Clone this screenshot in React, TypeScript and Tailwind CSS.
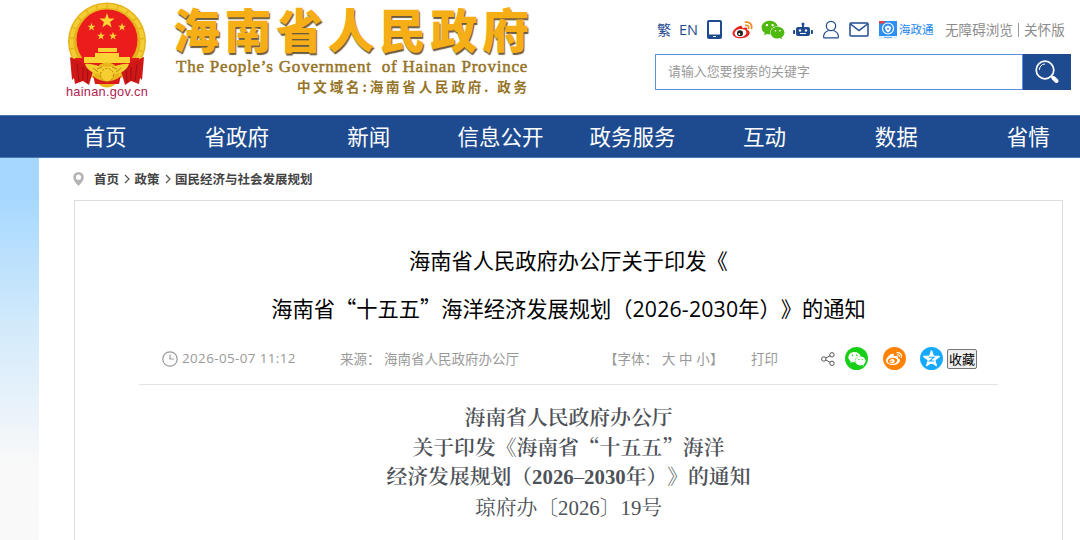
import React from "react";
import { FaWeixin, FaWeibo } from "react-icons/fa";

const nav = ["首页", "省政府", "新闻", "信息公开", "政务服务", "互动", "数据", "省情"];

const star = (cx: number, cy: number, r: number) =>
  Array.from({ length: 10 }, (_, i) => {
    const a = -Math.PI / 2 + (i * Math.PI) / 5;
    const k = i % 2 ? r * 0.4 : r;
    return `${cx + k * Math.cos(a)},${cy + k * Math.sin(a)}`;
  }).join(" ");

function Emblem() {
  return (
    <svg width="80" height="86" viewBox="0 0 80 86" className="block">
      <circle cx="40" cy="39.500" r="39" fill="#e6b31d" />
      <circle cx="40" cy="39.500" r="35.500" fill="none" stroke="#f3cd33" strokeWidth="4" strokeDasharray="9 1.500" />
      <circle cx="40" cy="38" r="30.500" fill="#ea1c1c" />
      <path d="M8 56h64l3 10-8 4H13l-8-4z" fill="#df1a1a" />
      <g fill="#fbd335">
        <polygon points={star(40, 19, 8)} />
        <polygon points={star(24.5, 25, 4.2)} />
        <polygon points={star(55, 25, 4.2)} />
        <polygon points={star(34, 34, 4.2)} />
        <polygon points={star(46, 34, 4.2)} />
        <path d="M31 46h19v4H31zM28 51h24v4H28zM17 55h46v6H17z" />
      </g>
      <path d="M3 55l13 6 10 8-4 14-6-4-8 3-1-6-2 2zM77 55l-13 6-10 8 4 14 6-4 8 3 1-6 2 2z" fill="#cf1717" />
      <path d="M10 62l2 17M16 65v13M21 67l-1 14M70 62l-2 17M64 65v13M59 67l1 14" stroke="#991111" strokeWidth="1" />
      <circle cx="40" cy="73" r="12.500" fill="#e9b71c" />
      <path d="M18 62c8-1 12 3 22 3s14-4 22-3c-3 9-11 10-22 10s-19-1-22-10z" fill="#f5cf30" />
      <path d="M30 67l5-2M45 65l5 2M26 66l5 4M54 66l-5 4" stroke="#bd7d12" />
      <path d="M26 73c4 8 24 8 28 0l-2 9H28z" fill="#d81a1a" />
      <circle cx="40" cy="73" r="6.500" fill="#f5cf30" stroke="#bd7d12" strokeWidth="1" strokeDasharray="2 1.500" />
    </svg>
  );
}

function WeiboColor() {
  return (
    <svg width="21" height="18" viewBox="0 0 21 18">
      <path d="M8 5C4 6 0 10 .6 13c.6 3 4.400 4.300 8.400 4.200 5-.2 8.700-2.700 8.700-5.500 0-1.700-1.300-2.500-2.600-2.800.7-1.900-.6-3.100-4.700-1.600C10.600 5.400 9.700 4.500 8 5z" fill="#e1251b" />
      <ellipse cx="8.500" cy="12" rx="6" ry="4" fill="#fff" transform="rotate(-8 8.500 12)" />
      <circle cx="8" cy="12.300" r="3" fill="#222" />
      <circle cx="7.300" cy="12.900" r="1" fill="#fff" />
      <path d="M13.500 1.200c4-.8 7 2.300 6 6.300M13.800 4.400c2-.3 3.300 1 2.800 2.900" fill="none" stroke="#f08a24" strokeWidth="1.700" strokeLinecap="round" />
    </svg>
  );
}

function Header() {
  return (
    <header className="flex h-[115px]">
      <div className="ml-[65px] flex w-[83px] flex-col items-center pt-[2px]">
        <Emblem />
        <span className="-mt-[4px] pl-px text-[12.800px] leading-[15px] tracking-[0.020em] text-[#b01c50] font-['Liberation_Sans',sans-serif]">hainan.gov.cn</span>
      </div>
      <div className="ml-[25px] flex w-[370px] flex-col">
        <div className="h-[56px] whitespace-nowrap text-[47px] font-black leading-[56px] tracking-[4.500px] text-[#f6ae17] [text-shadow:1px_2px_1px_#6b5a3c]">海南省人民政府</div>
        <div className="ml-[3px] h-[20px] whitespace-pre text-[17px] leading-[22px] tracking-[0.790px] text-[#967427] [-webkit-text-stroke:0.500px_#967427] font-['Liberation_Serif',serif]">The People’s Government  of Hainan Province</div>
        <div className="ml-[124px] h-[20px] whitespace-pre text-[13.500px] font-bold leading-[20px] tracking-[2.850px] text-[#967427]">中文域名:海南省人民政府. 政务</div>
      </div>
      <div className="ml-[112px] w-[416px]">
        <div className="mt-[19px] flex h-[21px] items-center whitespace-nowrap text-[#1e4b8f]">
          <span className="ml-[2px] w-[22px] text-[14px]">繁</span>
          <span className="w-[28px] text-[14.500px] font-['Open_Sans',sans-serif]">EN</span>
          <svg width="15" height="19" viewBox="0 0 15 19"><path d="M2 0h11a2 2 0 0 1 2 2v15a2 2 0 0 1-2 2H2a2 2 0 0 1-2-2V2a2 2 0 0 1 2-2zm0 2v12.500h11V2zM6 16v1h3v-1z" fill="currentColor" fillRule="evenodd" /></svg>
          <span className="ml-[10px]"><WeiboColor /></span>
          <FaWeixin className="ml-[8px] h-[22px] w-[24px] text-[#4fb910]" />
          <svg className="ml-[8px]" width="20" height="16" viewBox="0 0 20 16" fill="currentColor"><path d="M9 2h2v3h4a2 2 0 0 1 2 2v5a2 2 0 0 1-2 2H5a2 2 0 0 1-2-2V7a2 2 0 0 1 2-2h4zM1 8h1v4H1a1 1 0 0 1-1-1V9a1 1 0 0 1 1-1zm17 0h1a1 1 0 0 1 1 1v2a1 1 0 0 1-1 1h-1z" /><circle cx="10" cy="2" r="1.500" /><circle cx="7" cy="8.500" r="1.200" fill="#fff" /><circle cx="13" cy="8.500" r="1.200" fill="#fff" /><path d="M7 11.500h6" stroke="#fff" /></svg>
          <svg className="ml-[9px]" width="18" height="19" viewBox="0 0 18 19" fill="none" stroke="currentColor" strokeWidth="1.200"><circle cx="9" cy="6" r="4.700" /><path d="M1.500 17.500c0-4 2-6 5-7M16.500 17.500c0-4-2-6-5-7M1.500 17.800h15" /></svg>
          <svg className="ml-[9px]" width="20" height="15" viewBox="0 0 20 15" fill="none" stroke="currentColor" strokeWidth="1.500"><rect x="1" y="1" width="18" height="13" rx="1" /><path d="M1.500 2l8.500 6.500L18.500 2" /></svg>
          <svg className="ml-[10px]" width="18" height="18" viewBox="0 0 18 18"><path d="M0 0h18v15H0z" fill="#2b8ff5" /><path d="M0 0h6L5 2.500H0z" fill="#e64040" /><circle cx="9" cy="7.500" r="5.500" fill="none" stroke="#fff" strokeWidth="1.200" /><path d="M6 6l3-1.500L12 6c0 3-1 4.500-3 5.500C7 10.500 6 9 6 6z" fill="#fff" /><circle cx="9" cy="7.800" r="1" fill="#2b8ff5" /><path d="M0 15h18v3H0z" fill="#e3f1ff" /><path d="M5 16.500h8" stroke="#6fb2f5" /></svg>
          <span className="ml-[2px] w-[46px] text-[11.500px] text-[#1b86f0]">海政通</span>
          <span className="text-[13.600px] text-[#8c8c8c]">无障碍浏览</span>
          <span className="ml-[5px] mr-[4px] h-[14px] w-px bg-[#999]" />
          <span className="ml-px text-[13.600px] text-[#8c8c8c]">关怀版</span>
        </div>
        <div className="mt-[14px] flex h-[36px]">
          <div className="w-[368px] border border-[#5b8fe0] pl-[12px] text-[12.900px] leading-[32px] text-[#999]">请输入您要搜索的关键字</div>
          <div className="flex flex-1 items-center justify-center bg-[#1e4b8f]">
            <svg width="26" height="26" viewBox="0 0 26 26" fill="none" stroke="#fff"><circle cx="11" cy="11" r="8.800" strokeWidth="1.700" /><path d="M5.500 11A5.500 5.500 0 0 1 11 5" strokeWidth="1" /><path d="M17.500 17.500l1.500 1.500" strokeWidth="2" /><path d="M19.500 19l3 3" strokeWidth="4" strokeLinecap="round" /></svg>
          </div>
        </div>
      </div>
    </header>
  );
}

function Round({ color, children }: { color: string; children: React.ReactNode }) {
  return <span className="flex size-[23px] items-center justify-center rounded-full text-white" style={{ background: color }}>{children}</span>;
}

function Chevron() {
  return (
    <svg width="6" height="10" viewBox="0 0 6 10" className="ml-[5px] mr-[4.500px]" fill="none" stroke="#555" strokeWidth="1.200"><path d="M1 1l4 4-4 4" /></svg>
  );
}

export default function App() {
  return (
    <div lang="zh-CN" className="flex h-[540px] w-[1080px] flex-col overflow-hidden bg-white font-['Noto_Sans_CJK_SC',sans-serif] [text-spacing-trim:space-all]">
      <Header />
      <nav className="grid h-[43px] shrink-0 grid-cols-[repeat(8,131.900px)] border-y border-[#4b76b6] bg-[#1e4b8f] pl-[39px] text-center text-[21.500px] leading-[40px] text-white">
        {nav.map((n) => <span key={n} className="whitespace-nowrap">{n}</span>)}
      </nav>
      <div className="flex min-h-0 flex-1">
        <aside className="w-[39px] shrink-0 bg-linear-to-b from-[#a6d8ff] from-10% via-[#d0e9fb] via-42% to-[#f9f9f9] to-80%" />
        <main className="flex w-[1041px] flex-col">
          <div className="ml-[34px] flex h-[42px] items-center text-[12.500px] font-bold text-[#444]">
            <svg width="11" height="14" viewBox="0 0 11 14" className="mr-[10px]"><path d="M5.500 0A5.300 5.300 0 0 0 .2 5.300C.2 9 5.500 14 5.500 14s5.300-5 5.300-8.700A5.300 5.300 0 0 0 5.500 0zm0 2.600a2.600 2.600 0 1 1 0 5.200 2.600 2.600 0 0 1 0-5.200z" fill="#b3b3b3" fillRule="evenodd" /></svg>
            <span>首页</span>
            <Chevron />
            <span>政策</span>
            <Chevron />
            <span>国民经济与社会发展规划</span>
          </div>
          <article className="ml-[35px] flex w-[989px] flex-1 flex-col border border-b-0 border-[#ddd]">
            <h1 className="mt-[35px] whitespace-nowrap text-center text-[21.250px] leading-[48px] text-black">
              <span className="block">海南省人民政府办公厅关于印发《</span>
              <span className="block">海南省“十五五”海洋经济发展规划（<span className="tracking-[0.200px] font-['Open_Sans',sans-serif]">2026-2030</span>年）》的通知</span>
            </h1>
            <div className="mx-[64px] flex h-[52px] items-center whitespace-nowrap border-b border-[#e4e4e4] pl-[23px] text-[13.500px] text-[#999]">
              <svg width="16" height="16" viewBox="0 0 16 16" fill="none" stroke="#999" strokeWidth="1.200"><circle cx="8" cy="8" r="7.200" /><path d="M8 3.500V8h4" /></svg>
              <span className="ml-[4px] w-[158px] text-[13.400px] tracking-[0.400px] font-['Open_Sans',sans-serif]">2026-05-07 11:12</span>
              <span className="w-[44px]">来源：</span>
              <span className="w-[220px]">海南省人民政府办公厅</span>
              <span className="w-[58px]">【字体：</span>
              <span className="w-[89px] tracking-[0.300px]">大 中 小】</span>
              <span className="w-[70px]">打印</span>
              <svg width="14" height="14" viewBox="0 0 14 14" fill="none" stroke="#555" strokeWidth="1"><circle cx="2.800" cy="7" r="2.200" /><circle cx="11" cy="2.800" r="2.200" /><circle cx="11" cy="11.300" r="2.200" /><path d="M4.800 6l4.200-2.200M4.800 8l4.200 2.300" /></svg>
              <span className="ml-[10px] flex gap-[14.500px]">
                <Round color="#17cf17"><FaWeixin className="size-[18px]" /></Round>
                <Round color="#ff8200"><FaWeibo className="size-[16px]" /></Round>
                <Round color="#15aaff"><svg width="17" height="17" viewBox="0 0 17 17"><polygon points={star(8.5, 9, 8)} fill="#fff" stroke="#fff" strokeLinejoin="round" strokeWidth="1.500" /><path d="M6 7.300h5l-4.500 3.700H11" stroke="#15aaff" strokeWidth="1.100" fill="none" /></svg></Round>
              </span>
              <button className="ml-[4px] h-[20px] w-[30px] rounded-[2px] border border-[#767676] bg-[#efefef] text-[13px] leading-[18px] text-black">收藏</button>
            </div>
            <div className="mt-[17px] whitespace-nowrap text-center text-[20.800px] leading-[29.700px] text-[#4d5258] font-['Noto_Serif_CJK_SC','Noto_Sans_CJK_SC',serif]">
              <p className="font-semibold">海南省人民政府办公厅</p>
              <p className="font-semibold">关于印发《海南省“十五五”海洋</p>
              <p className="font-semibold">经济发展规划（<span className="font-['Liberation_Serif',serif]">2026<span className="inline-block w-[10.400px] text-center font-normal">–</span>2030</span>年）》的通知</p>
              <p className="leading-[28px]">琼府办〔<span className="font-['Liberation_Serif',serif]">2026</span>〕<span className="font-['Liberation_Serif',serif]">19</span>号</p>
            </div>
          </article>
        </main>
      </div>
    </div>
  );
}
